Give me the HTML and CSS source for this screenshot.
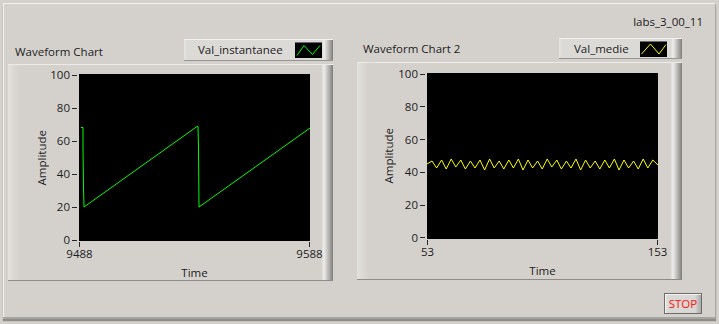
FILE: index.html
```html
<!DOCTYPE html>
<html lang="en">
<head>
<meta charset="utf-8">
<title>labs_3_00_11</title>
<link rel="stylesheet" href="styles.css">
</head>
<body>
<div class="window">
  <div class="panel">
    <div class="title-row"><span class="vi-name">labs_3_00_11</span></div>
    <div class="charts">
      <section class="chart chart-1">
        <header class="chart-head">
          <span class="chart-label">Waveform Chart</span>
          <div class="legend">
            <span class="legend-name">Val_instantanee</span>
            <span class="swatch">
              <svg width="27" height="16" viewBox="0 0 27 16"><polyline points="2,12.5 9,2.5 17.5,11.5 25,2.5" fill="none" stroke="#00ff00" stroke-width="1"/></svg>
            </span>
          </div>
        </header>
        <div class="frame">
          <div class="amp-label">Amplitude</div>
          <div class="y-axis">
            <div class="tick"><span>100</span></div>
            <div class="tick"><span>80</span></div>
            <div class="tick"><span>60</span></div>
            <div class="tick"><span>40</span></div>
            <div class="tick"><span>20</span></div>
            <div class="tick"><span>0</span></div>
          </div>
          <div class="plot">
            <svg width="231" height="167" viewBox="0 0 231 167"><polyline points="2,53.5 4,53.5 4,73 4.5,113 5,133 118,52.5 119,52.5 119.5,73 120,133 231,54" fill="none" stroke="#00ff00" stroke-width="1"/></svg>
          </div>
          <div class="x-axis">
            <div class="xtick"><i></i><span>9488</span></div>
            <div class="xtick"><i></i><span>9588</span></div>
          </div>
          <div class="time-label">Time</div>
        </div>
      </section>
      <section class="chart chart-2">
        <header class="chart-head">
          <span class="chart-label">Waveform Chart 2</span>
          <div class="legend">
            <span class="legend-name">Val_medie</span>
            <span class="swatch">
              <svg width="27" height="16" viewBox="0 0 27 16"><polyline points="1.5,12 10.5,2 19,12 26,2.5" fill="none" stroke="#ffff00" stroke-width="1"/></svg>
            </span>
          </div>
        </header>
        <div class="frame">
          <div class="amp-label">Amplitude</div>
          <div class="y-axis">
            <div class="tick"><span>100</span></div>
            <div class="tick"><span>80</span></div>
            <div class="tick"><span>60</span></div>
            <div class="tick"><span>40</span></div>
            <div class="tick"><span>20</span></div>
            <div class="tick"><span>0</span></div>
          </div>
          <div class="plot">
            <svg width="231" height="166" viewBox="0 0 231 166"><polyline points="0,91 5,88 9.6,95 14.6,87 19.2,96 24.2,86 28.8,94 33.8,87 38.4,96 43.4,88 48,95 53,87 57.6,97 62.6,86 67.2,95 72.2,88 76.8,96 81.8,87 86.4,95 91.4,86 96,97 101,87 105.6,95 110.6,88 115.2,96 120.2,86 124.8,94 129.8,87 134.4,96 139.4,88 144,95 149,86 153.6,97 158.6,87 163.2,95 168.2,88 172.8,96 177.8,87 182.4,95 187.4,86 192,97 197,87 201.6,95 206.6,88 211.2,96 216.2,86 220.8,95 225.8,87 231,92" fill="none" stroke="#ffff00" stroke-width="1"/></svg>
          </div>
          <div class="x-axis">
            <div class="xtick"><i></i><span>53</span></div>
            <div class="xtick"><i></i><span>153</span></div>
          </div>
          <div class="time-label">Time</div>
        </div>
      </section>
    </div>
    <div class="foot"><button class="stop" type="button">STOP</button></div>
  </div>
</div>
</body>
</html>
```
FILE: styles.css
```css
html, body {
  margin: 0;
  padding: 0;
  background: #d4d1cc;
}

body {
  font-family: "Open Sans", "Liberation Sans", sans-serif;
  font-size: 11.5px;
  color: #1c1c24;
}

.window {
  width: 719px;
  height: 324px;
  padding: 3px 3px 0 3px;
  box-sizing: border-box;
  background: #d4d1cc;
  overflow: hidden;
}

.panel {
  width: 713px;
  height: 314px;
  box-sizing: border-box;
  border-top: 1px solid #f2f1ee;
  border-left: 1px solid #f2f1ee;
  border-right: 1px solid #a9a7a3;
  background: #d4d1cc;
  box-shadow: 0 2px 0 #a6a4a0, 0 4px 1px #8e8c89;
  display: flex;
  flex-direction: column;
  padding: 11px 12px 3px 4px;
}

.title-row {
  display: flex;
  justify-content: flex-end;
  line-height: 14px;
  height: 14px;
}

.charts {
  display: flex;
  align-items: flex-start;
  gap: 24px;
  margin-top: 10px;
}

.chart {
  width: 325px;
  display: flex;
  flex-direction: column;
}

.chart-2 {
  margin-top: -1px;
}

.chart-head {
  display: flex;
  justify-content: space-between;
  align-items: flex-end;
  height: 22px;
  margin-bottom: 3px;
}

.chart-2 .chart-head {
  height: 21px;
  margin-bottom: 3px;
}

.chart-label {
  line-height: 14px;
  padding-left: 7px;
  padding-bottom: 2px;
  white-space: nowrap;
}

.chart-2 .chart-label {
  padding-left: 6px;
  padding-bottom: 3px;
}

.legend {
  height: 22px;
  box-sizing: border-box;
  display: flex;
  align-items: center;
  padding: 0 15px 0 14px;
  gap: 12px;
  border-top: 1px solid #f3f2f0;
  border-bottom: 1px solid #979592;
  background: linear-gradient(to right, #e6e4e1 0, #dcdad6 3px, #dcdad6 calc(100% - 11px), #efeeec calc(100% - 9px), #b4b2af calc(100% - 4px), #7f7e7c 100%);
}

.chart-1 .legend {
  width: 149px;
}

.chart-2 .legend {
  width: 123px;
  height: 21px;
  padding-left: 15px;
  gap: 11px;
}

.legend-name {
  flex: 1;
  line-height: 14px;
  white-space: nowrap;
}

.swatch {
  width: 27px;
  height: 16px;
  background: #000;
  border-top: 1px solid #6a6a6a;
  box-sizing: border-box;
  display: flex;
}

.swatch svg {
  display: block;
}

.frame {
  height: 217px;
  box-sizing: border-box;
  padding: 9px 0 0 28px;
  display: grid;
  grid-template-columns: 12px 31px 231px;
  grid-template-rows: 167px auto auto;
  border-top: 1px solid #ecebe8;
  border-bottom: 1px solid #8c8b88;
  background: linear-gradient(to right, #e4e2de 0, #d8d5d0 8px, #d4d1cc 12px, #d4d1cc calc(100% - 12px), #eeedeb calc(100% - 9px), #b3b1ae calc(100% - 4px), #7d7c7a 100%);
}

.chart-2 .frame {
  height: 218px;
  padding-top: 10px;
  padding-left: 26px;
  grid-template-columns: 12px 32px 231px;
  grid-template-rows: 166px auto auto;
}

.amp-label {
  grid-row: 1;
  grid-column: 1;
  writing-mode: vertical-rl;
  transform: rotate(180deg);
  align-self: center;
  justify-self: center;
  line-height: 12px;
  white-space: nowrap;
}

.y-axis {
  grid-row: 1;
  grid-column: 2;
  display: flex;
  flex-direction: column;
  justify-content: space-between;
}

.tick {
  height: 2px;
  line-height: 2px;
  display: flex;
  align-items: center;
  justify-content: flex-end;
  white-space: nowrap;
}

.tick span {
  margin-right: 2px;
}

.tick::after {
  content: "";
  width: 5px;
  height: 1px;
  background: #26262c;
  margin-right: 2px;
}

.plot {
  grid-row: 1;
  grid-column: 3;
  background: #000;
  overflow: hidden;
}

.plot svg {
  display: block;
}

.x-axis {
  grid-row: 2;
  grid-column: 3;
  display: flex;
  justify-content: space-between;
}

.xtick {
  width: 1px;
  display: flex;
  flex-direction: column;
  align-items: center;
}

.xtick i {
  display: block;
  width: 1px;
  height: 5px;
  margin-top: 1px;
  background: #26262c;
}

.xtick span {
  line-height: 14px;
  white-space: nowrap;
}

.time-label {
  grid-row: 3;
  grid-column: 3;
  text-align: center;
  line-height: 14px;
  margin-top: 4px;
}

.foot {
  margin-top: auto;
  display: flex;
  justify-content: flex-end;
  padding-right: 1px;
}

.stop {
  width: 38px;
  height: 21px;
  box-sizing: border-box;
  padding: 0;
  margin: 0;
  font-family: "Open Sans", "Liberation Sans", sans-serif;
  font-size: 11.5px;
  color: #ff1010;
  border: 1px solid #6e6d6b;
  background: linear-gradient(to right, #e4e3e0 0, #dad8d4 4px, #dad8d4 calc(100% - 6px), #a9a8a5 100%);
  box-shadow: inset 1px 1px 0 #f4f3f1;
  line-height: 19px;
}
```
